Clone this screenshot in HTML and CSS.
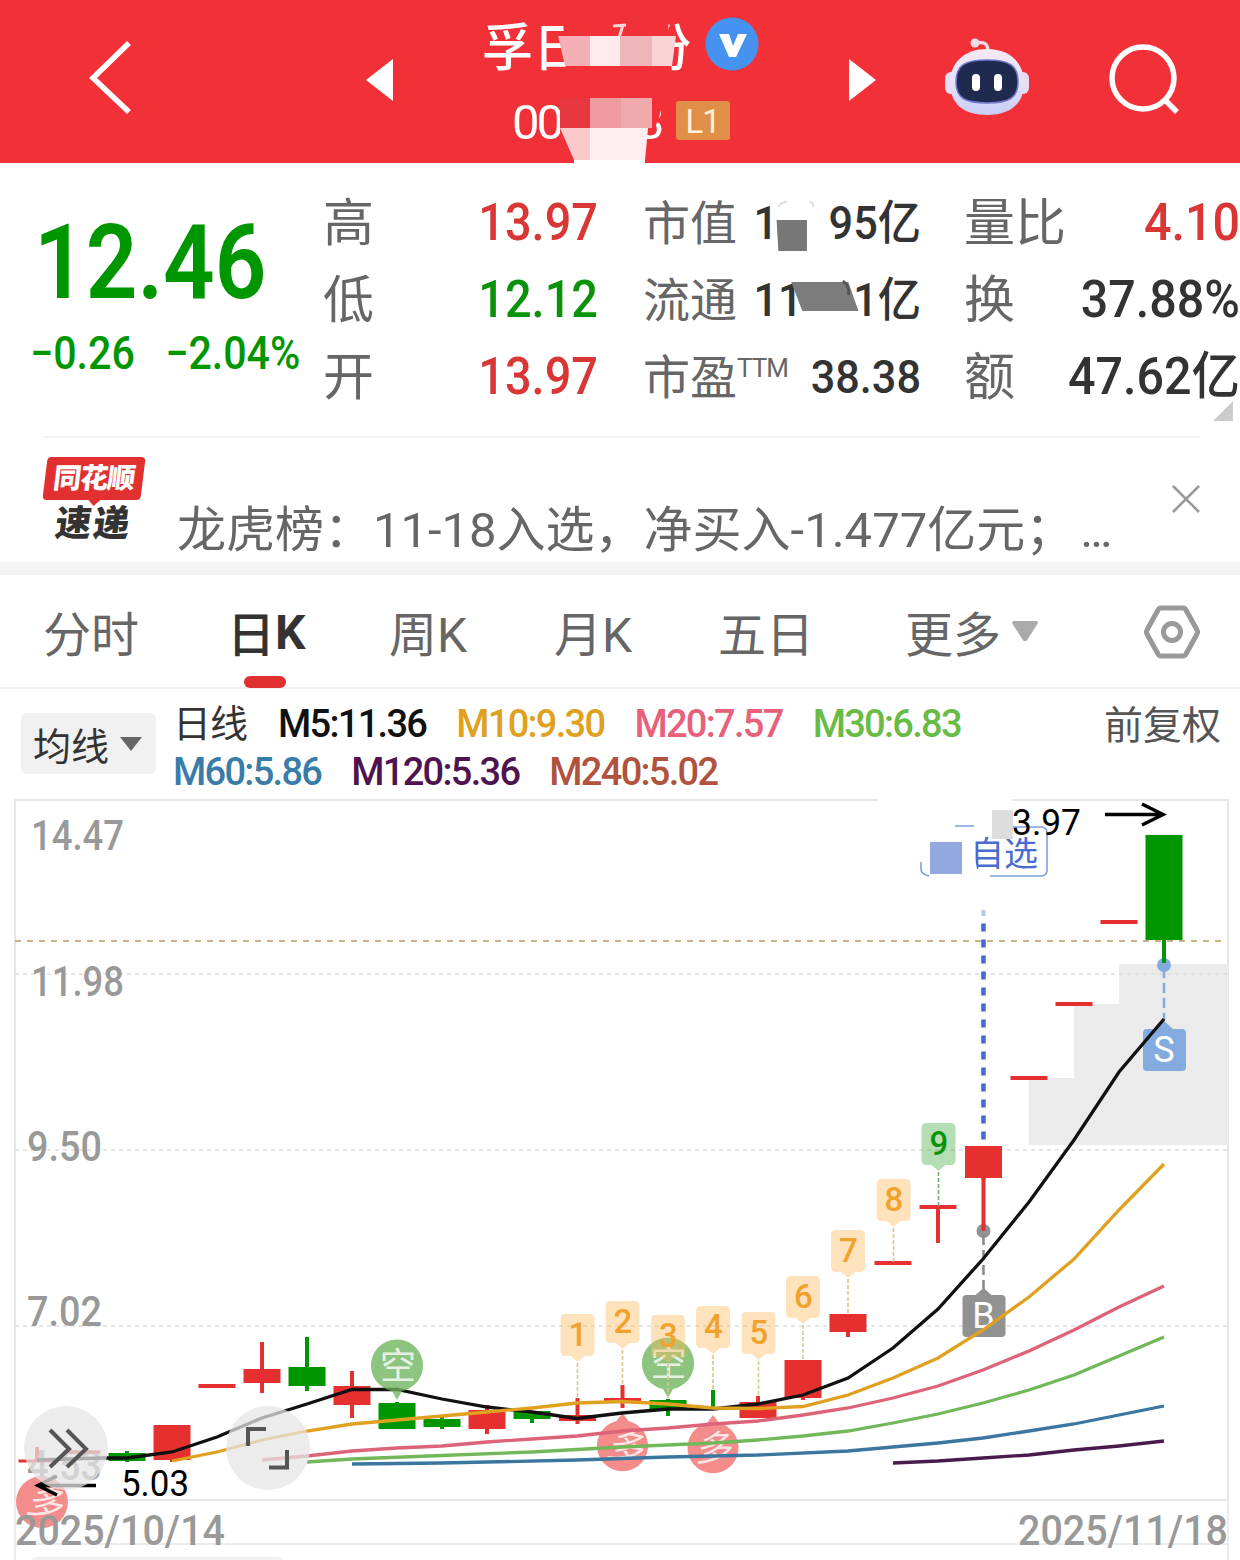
FILE: index.html
```html
<!DOCTYPE html>
<html lang="zh-CN">
<head>
  <meta charset="UTF-8">
  <title>日K</title>
  <link rel="stylesheet" href="styles.css">
</head>
<body>

  <header class="topbar">
    <svg class="back" width="46" height="78" viewBox="0 0 46 78"><path d="M41 4 L5 39 L41 73" fill="none" stroke="#fff" stroke-width="5.5"/></svg>
    <svg class="prev" width="27" height="42" viewBox="0 0 27 42"><path d="M27 0 V42 L0 21 Z" fill="#fff"/></svg>

    <div class="stock">
      <div class="stock-name">
        <span>孚日</span><span class="last">份</span>
        <svg class="verified" width="54" height="54" viewBox="0 0 54 54"><circle cx="27" cy="27" r="26.5" fill="#4592f0"/><path d="M14 17 h10 l4 12 5 -12 h9 l-11 23 h-7 z" fill="#fff"/></svg>
      </div>
      <div class="stock-code">
        <span>00</span><span class="last">3</span><b class="level">L1</b>
      </div>
      <svg class="mosaic" width="282" height="163" viewBox="480 0 282 163">
        <path d="M563 20 H668 L672 74 H566 Z" fill="#f23038"/>
        <path d="M623 25 L618 41 M613 26 l13 -1 M615 40 l12 -1" stroke="#fbd5d7" stroke-width="3" fill="none"/>
        <path d="M558 36 H590 V66 H565 Z" fill="#f4b0b4"/>
        <path d="M590 36h30v30h-30z" fill="#fdeaec"/>
        <path d="M620 36h32v30h-32z" fill="#efb6b9"/>
        <path d="M652 36h24l-4 30h-20z" fill="#f8d4d7"/>
        <path d="M560 98h92v34h-92z" fill="#e8383f"/>
        <path d="M652 98h10l-3 22 -5 8 -8 7h-5v-37z" fill="#f23038"/>
        <path d="M590 98h31v30h-31z" fill="#ef9ba0"/>
        <path d="M621 98h31v30h-31z" fill="#f0a9ad"/>
        <path d="M560 128h30v32h-16z" fill="#fac9cc"/>
        <path d="M590 128h58l-3 32h-55z" fill="#fdeff1"/>
        <path d="M574 160h71v3h-71z" fill="#fff"/>
      </svg>
    </div>

    <svg class="next" width="27" height="42" viewBox="0 0 27 42"><path d="M0 0 V42 L27 21 Z" fill="#fff"/></svg>
    <svg class="robot" width="84" height="78" viewBox="0 0 84 78">
      <defs>
        <linearGradient id="shell" x1="0" y1="0" x2="0" y2="1"><stop offset="0" stop-color="#f6e9f3"/><stop offset=".6" stop-color="#dfe0f8"/><stop offset="1" stop-color="#c9cdf5"/></linearGradient>
      </defs>
      <path d="M31 5 C39 3 43 6 43 13" fill="none" stroke="#f3dbe6" stroke-width="3.5"/>
      <circle cx="30" cy="5" r="4.5" fill="#f3dbe6"/>
      <rect x="0" y="34" width="14" height="22" rx="6" fill="#e9dcf2"/>
      <rect x="70" y="34" width="14" height="22" rx="6" fill="#e9dcf2"/>
      <path d="M42 11 C64 11 79 24 79 45 C79 66 65 77 42 77 C19 77 5 66 5 45 C5 24 20 11 42 11 Z" fill="url(#shell)"/>
      <path d="M42 22 C64 22 73 27 73 44 C73 60 64 65 42 65 C20 65 11 60 11 44 C11 27 20 22 42 22 Z" fill="#1e2b4f" stroke="#6f76cf" stroke-width="1.5"/>
      <rect x="27" y="36" width="8" height="17" rx="4" fill="#fff"/>
      <rect x="49" y="36" width="8" height="17" rx="4" fill="#fff"/>
    </svg>
    <svg class="search" width="71" height="71" viewBox="0 0 71 71"><circle cx="34" cy="34" r="31" fill="none" stroke="#fff" stroke-width="5.5"/><path d="M55 55 L68 68" stroke="#fff" stroke-width="5.5"/></svg>
  </header>

  <section class="quote">
    <div class="price">
      <div class="now">12.46</div>
      <div class="change"><span>−0.26</span><span>−2.04%</span></div>
    </div>
    <dl class="col col-a">
      <dt>高</dt><dd class="up">13.97</dd>
      <dt>低</dt><dd class="down">12.12</dd>
      <dt>开</dt><dd class="up">13.97</dd>
    </dl>
    <dl class="col col-b">
      <dt>市值</dt><dd><span>1</span><svg width="55" height="60" viewBox="0 0 55 60"><path d="M-2 29h33v31H0z" fill="#777"/><path d="M0 16 q3 -5 9 -5 M34 11 q4 0 4 5" fill="none" stroke="#ddd" stroke-width="2"/></svg><span>95亿</span></dd>
      <dt>流通</dt><dd><span>11</span><svg width="55" height="60" viewBox="0 0 55 60"><path d="M-12 14 H50 L61 43 H0 Z" fill="#7c7c7c"/><path d="M44 13 q8 5 6 14" fill="none" stroke="#555" stroke-width="3"/></svg><span>1亿</span></dd>
      <dt>市盈<sup>TTM</sup></dt><dd>38.38</dd>
    </dl>
    <dl class="col col-c">
      <dt>量比</dt><dd class="up">4.10</dd>
      <dt>换</dt><dd>37.88%</dd>
      <dt>额</dt><dd>47.62亿</dd>
    </dl>
    <svg class="corner" width="20" height="20" viewBox="0 0 20 20"><path d="M20 0 V20 H0 Z" fill="#ccc"/></svg>
  </section>

  <section class="news">
    <div class="news-logo">
      <div class="brand">同花顺</div>
      <div class="express">速递</div>
    </div>
    <p>龙虎榜：11-18入选，净买入-1.477亿元；<span class="dots">...</span></p>
    <svg class="close" width="28" height="28" viewBox="0 0 28 28"><path d="M1 1 L27 27 M27 1 L1 27" stroke="#999" stroke-width="2.6"/></svg>
  </section>

  <nav class="tabs">
    <a>分时</a>
    <a class="active">日<b>K</b></a>
    <a>周K</a>
    <a>月K</a>
    <a>五日</a>
    <a>更多<svg width="26" height="21" viewBox="0 0 26 21"><path d="M1 0 H25 L26 2 L14.5 20 H11.5 L0 2 Z" fill="#aaa"/></svg></a>
    <svg class="settings" width="56" height="54" viewBox="0 0 56 54"><path d="M17 3 H39 Q41 3 42 5 L53 25 Q54 27 53 29 L42 49 Q41 51 39 51 H17 Q15 51 14 49 L3 29 Q2 27 3 25 L14 5 Q15 3 17 3 Z" fill="none" stroke="#999" stroke-width="5"/><circle cx="28" cy="27" r="8.5" fill="none" stroke="#999" stroke-width="5"/></svg>
  </nav>

  <section class="averages">
    <button class="ma-button">均线<svg width="22" height="14" viewBox="0 0 22 14"><path d="M0 0 H22 L11 14 Z" fill="#666"/></svg></button>
    <div class="ma-list">
      <div class="ma-row">
        <span class="cycle">日线</span>
        <span class="m5">M5:11.36</span>
        <span class="m10">M10:9.30</span>
        <span class="m20">M20:7.57</span>
        <span class="m30">M30:6.83</span>
      </div>
      <div class="ma-row">
        <span class="m60">M60:5.86</span>
        <span class="m120">M120:5.36</span>
        <span class="m240">M240:5.02</span>
      </div>
    </div>
    <span class="adjust">前复权</span>
  </section>

  <svg class="chart" width="1240" height="761" viewBox="0 799 1240 761">
    <!-- frame and grid -->
    <path d="M878 800 H15 V1500 H1228 V800 H1012" fill="none" stroke="#e6e6e6" stroke-width="2"/>
    <path d="M15 1500 V1560 M1228 1500 V1560 M15 1544 H1228" stroke="#ececec" stroke-width="2"/>
    <rect x="30" y="1557" width="254" height="20" rx="6" fill="#f1f1f1"/>
    <path d="M1029 1145 V1078 H1074 V1004 H1119 V964 H1228 V1145 Z" fill="#ebebeb"/>
    <path d="M15 974 H1228 M15 1150 H1228 M15 1326 H1228" stroke="#ddd" stroke-width="1.3" stroke-dasharray="4 4"/>
    <path d="M15 941 H1224" stroke="#c9b483" stroke-width="2" stroke-dasharray="6 6"/>

    <g class="axis">
      <text x="31" y="850" textLength="93" lengthAdjust="spacingAndGlyphs">14.47</text>
      <text x="31" y="996" textLength="93" lengthAdjust="spacingAndGlyphs">11.98</text>
      <text x="27" y="1161" textLength="75" lengthAdjust="spacingAndGlyphs">9.50</text>
      <text x="27" y="1326" textLength="75" lengthAdjust="spacingAndGlyphs">7.02</text>
      <text x="27" y="1480" textLength="75" lengthAdjust="spacingAndGlyphs">4.53</text>
    </g>

    <g id="candles"></g>

    <!-- buy / sell marks -->
    <circle cx="983.5" cy="1231" r="7" fill="#929292"/>
    <path d="M983.5 1178 V1231" stroke="#e63030" stroke-width="4"/>
    <path d="M983.5 1235 V1289" stroke="#888" stroke-width="2.5" stroke-dasharray="10 5"/>
    <path d="M983.5 1288 l8 7 h10 q4 0 4 4 v34 q0 4 -4 4 h-35 q-4 0 -4 -4 v-34 q0 -4 4 -4 h9 z" fill="#929292"/>
    <text class="mark" x="983.5" y="1328">B</text>
    <circle cx="1164" cy="965" r="7" fill="#83abdf"/>
    <path d="M1164 940 V963" stroke="#0a930a" stroke-width="4"/>
    <path d="M1164 968 V1020" stroke="#83abdf" stroke-width="2.5" stroke-dasharray="10 5"/>
    <path d="M1164 1021 l9 8 h9 q4 0 4 4 v34 q0 4 -4 4 h-35 q-4 0 -4 -4 v-34 q0 -4 4 -4 h9 z" fill="#83abdf"/>
    <text class="mark" x="1164" y="1062">S</text>

    <g class="signal bull">
      <circle cx="42" cy="1502" r="26"/>
      <path d="M622.5 1413 l6 8 a25.5 25.5 0 1 1 -12 0 z"/>
      <path d="M713 1415 l6 8 a25.5 25.5 0 1 1 -12 0 z"/>
      <text transform="translate(42 1515) rotate(12) skewX(-12)">多</text>
      <text transform="translate(622.5 1459) rotate(12) skewX(-12)">多</text>
      <text transform="translate(713 1461) skewX(-12)">多</text>
    </g>

    <!-- moving averages -->
    <g class="lines">
      <polyline stroke="#4a1a4c" points="893,1463 938,1461 983,1458 1029,1455 1074,1450 1119,1446 1164,1441"/>
      <polyline stroke="#3a76a0" points="352,1464 397,1463.5 442,1463 487,1462 577,1460 668,1457 758,1455 848,1451 893,1447 938,1443 983,1438 1029,1431 1074,1424 1119,1415 1164,1406"/>
      <polyline stroke="#72b85a" points="307,1462 352,1459 442,1455.5 532,1452 622,1447 713,1443 758,1440 803,1436 848,1431 893,1423 938,1414 983,1403 1029,1390 1074,1375 1119,1356 1164,1337"/>
      <polyline stroke="#dd6478" points="262,1460 307,1456 352,1451 397,1448 442,1446 487,1442 532,1439 577,1436 622,1431 668,1428 713,1424 758,1421 803,1415 848,1408 893,1398 938,1386 983,1370 1029,1351 1074,1330 1119,1307 1164,1286"/>
      <polyline stroke="#111" points="37,1460 100,1458 127,1458 172,1452 217,1437 262,1418 307,1404 352,1389.5 397,1389.5 442,1399 487,1407 532,1412 577,1418.5 622,1413 668,1409 713,1409 758,1404 803,1395 848,1378 893,1348 938,1309 983,1259 1029,1202 1074,1140 1119,1072 1164,1019"/>
      <polyline stroke="#e0a020" points="172,1461 217,1452 262,1440 307,1431 352,1424 397,1420 442,1416 487,1412 532,1408 577,1403 622,1401.5 668,1404 713,1408 758,1408.5 803,1406.5 848,1395 893,1378 938,1358 983,1330 1029,1297 1074,1259 1119,1210 1164,1164"/>
    </g>

    <g class="signal bear">
      <path d="M397 1400 l-5 -9 a26 26 0 1 1 10 0 z"/>
      <path d="M668 1398 l-5 -9 a26 26 0 1 1 10 0 z"/>
      <text x="398" y="1379">空</text>
      <text x="668.5" y="1376">空</text>
    </g>

    <g id="tags"></g>

    <!-- watchlist flag -->
    <path d="M983.5 910 V916" stroke="#b9c6ec" stroke-width="4"/>
    <path d="M983.5 923.5 V1141" stroke="#4468cc" stroke-width="4.5" stroke-dasharray="8 8"/>
    <path d="M1002 827 H1041 Q1047 827 1047 833 V870 Q1047 876 1041 876 H990 M955 826 H974 M921 862 V869 Q921 874 929 876" fill="none" stroke="#7c9fdd" stroke-width="1.6"/>
    <text class="flag" x="970" y="866">自选</text>
    <path d="M962 838 H971 L978 874 H962 Z" fill="#fff"/>
    <rect x="930" y="842" width="32" height="32" fill="#94a9e0"/>
    <rect x="992" y="810" width="21" height="29" fill="#ddd"/>
    <text class="extreme" x="1012" y="835" textLength="69" lengthAdjust="spacingAndGlyphs">3.97</text>
    <path d="M1105 814.5 H1163 M1142 804 L1163 814.5 L1142 825" fill="none" stroke="#000" stroke-width="3.5"/>

    <text class="extreme" x="121" y="1496" textLength="68" lengthAdjust="spacingAndGlyphs">5.03</text>
    <path d="M96 1485.5 H38 M57 1476 L38 1485.5 L57 1495" fill="none" stroke="#000" stroke-width="3.5"/>
    <g class="axis">
      <text x="15" y="1545" textLength="210" lengthAdjust="spacingAndGlyphs">2025/10/14</text>
      <text x="1228" y="1545" text-anchor="end" textLength="210" lengthAdjust="spacingAndGlyphs">2025/11/18</text>
    </g>

    <!-- floating buttons -->
    <g class="float">
      <circle cx="66" cy="1448" r="42"/>
      <circle cx="268" cy="1448" r="42"/>
      <path d="M50 1430 L69 1449 L50 1467 M67 1430 L86 1449 L67 1467"/>
      <path d="M248 1446 V1429 H266 M269 1467.5 H287 V1450"/>
    </g>
  </svg>

  <script>
  const NS = "http://www.w3.org/2000/svg";

  // x, body top, body bottom, wick top, wick bottom, colour
  const candles = [
    [37, 1459.5, 1462.5, 1447, 1462, "r"],
    [82, 1450.5, 1453.5, 1451, 1453, "r"],
    [127, 1453, 1461, 1451, 1462, "g"],
    [172, 1425, 1460, 1425, 1462, "r"],
    [217, 1384, 1388, 1385, 1387, "r"],
    [262, 1369, 1383, 1342, 1393, "r"],
    [307, 1367, 1386, 1337, 1391, "g"],
    [352, 1386, 1405, 1371, 1418, "r"],
    [397, 1403, 1429, 1402, 1429, "g"],
    [442, 1419, 1427, 1415, 1429, "g"],
    [487, 1410, 1429, 1405, 1434, "r"],
    [532, 1411, 1419, 1411, 1423, "g"],
    [577.5, 1415, 1421, 1398, 1424, "r"],
    [622.5, 1398, 1402, 1385, 1408, "r"],
    [668, 1400, 1409, 1399, 1416, "g"],
    [713, 1407, 1410, 1390, 1410, "g"],
    [758, 1402, 1418, 1396, 1418, "r"],
    [803, 1360, 1398, 1360, 1400, "r"],
    [848, 1314, 1332, 1314, 1337, "r"],
    [893, 1261, 1265, 1262, 1264, "r"],
    [938, 1205, 1209, 1205, 1243, "r"],
    [983.5, 1146, 1178, 1146, 1180, "r"],
    [1029, 1076, 1080, 1077, 1079, "r"],
    [1074, 1002, 1006, 1003, 1005, "r"],
    [1119, 920, 924, 921, 923, "r"],
    [1164, 835, 940, 835, 963, "g"]
  ];

  // number, x, top of tag, end of dashed line
  const tags = [
    [1, 577.5, 1314, 1398],
    [2, 622.5, 1301, 1385],
    [3, 668, 1315, 1399],
    [4, 713, 1306, 1390],
    [5, 758.5, 1312, 1396],
    [6, 803, 1276, 1360],
    [7, 848, 1230, 1314],
    [8, 893.5, 1179, 1262],
    [9, 938.5, 1123, 1206]
  ];

  function add(parent, name, attrs) {
    const el = document.createElementNS(NS, name);
    for (const key in attrs) el.setAttribute(key, attrs[key]);
    parent.appendChild(el);
    return el;
  }

  const candleLayer = document.getElementById("candles");
  candles.forEach(([x, top, bottom, high, low, c]) => {
    const fill = c === "r" ? "#e63030" : "#009600";
    add(candleLayer, "rect", { x: x - 2, y: high, width: 4, height: low - high, fill });
    add(candleLayer, "rect", { x: x - 18.5, y: top, width: 37, height: bottom - top, fill });
  });

  const tagLayer = document.getElementById("tags");
  tags.forEach(([n, x, y, end]) => {
    const g = add(tagLayer, "g", { class: n === 9 ? "tag tag-done" : "tag" });
    add(g, "path", { class: "stem", d: `M${x} ${y + 49} V${end}` });
    add(g, "path", { class: "bubble", d: `M${x - 12} ${y} h24 q5 0 5 5 v32 q0 5 -5 5 h-5 l-7 6 -7 -6 h-5 q-5 0 -5 -5 v-32 q0 -5 5 -5 z` });
    add(g, "text", { x: x + 0.5, y: y + 32 }).textContent = n;
  });
  </script>

</body>
</html>
```
FILE: styles.css
```css
* {
  box-sizing: border-box;
}

body {
  margin: 0;
  width: 1240px;
  height: 1560px;
  overflow: hidden;
  background: #fff;
  color: #333;
  font-family: Roboto, "Noto Sans CJK SC", sans-serif;
}

svg {
  display: block;
  flex: none;
}

.topbar {
  display: flex;
  align-items: center;
  height: 163px;
  padding-bottom: 4px;
  background: #f23038;
  color: #fff;
}

.back {
  margin: 0 232px 4px 88px;
}

.stock {
  position: relative;
  align-self: flex-start;
  width: 282px;
  height: 163px;
  margin: 0 87px;
}

.stock-name {
  display: flex;
  align-items: center;
  height: 92px;
  padding-left: 2px;
  font-size: 51px;
  font-weight: 500;
}

.stock-name span {
  margin-top: -5px;
}

.stock-name .last {
  margin-left: 56px;
}

.verified {
  margin: 0 0 4px 14px;
}

.stock-code {
  display: flex;
  align-items: center;
  height: 60px;
  padding-left: 32px;
  font-size: 49px;
  letter-spacing: -3px;
}

.stock-code .last {
  margin-left: 76px;
}

.level {
  width: 54px;
  height: 39px;
  margin: -3px 0 0 14px;
  border-radius: 3px;
  background: #e08f48;
  color: #fff0d8;
  font-size: 33px;
  font-weight: 400;
  letter-spacing: -1px;
  line-height: 41px;
  text-align: center;
}

.mosaic {
  position: absolute;
  left: 0;
  top: 0;
}

.robot {
  margin: 0 80px 6px 69px;
}

.quote {
  position: relative;
  display: flex;
  height: 273px;
  padding-top: 21px;
}

.price {
  width: 323px;
  padding-left: 34px;
  color: #009600;
  font-weight: 500;
}

.now {
  width: 270px;
  height: 130px;
  padding-top: 14px;
  font-size: 104px;
  font-weight: 600;
  line-height: 130px;
  transform: scaleX(0.87);
  transform-origin: left;
}

.change {
  display: flex;
  gap: 34px;
  margin: 12px 0 0 -4px;
  font-size: 46px;
  line-height: 54px;
  white-space: nowrap;
  transform: scaleX(0.895);
  transform-origin: left;
}

.col {
  display: grid;
  grid-template-columns: 94px 1fr;
  grid-auto-rows: 77px;
  margin: 0;
  line-height: 78px;
  white-space: nowrap;
}

.col-a {
  width: 275px;
}

.col-b {
  width: 278px;
  margin-left: 45px;
}

.col-c {
  grid-template-columns: 56px 1fr;
  width: 276px;
  margin-left: 43px;
}

.col dt {
  padding-top: 1px;
  color: #666;
  font-size: 51px;
}

.col-b dt {
  font-size: 47px;
}

.col-b sup {
  font-size: 26px;
  letter-spacing: -1px;
  line-height: 0;
  vertical-align: 17px;
}

.col dd {
  display: flex;
  justify-content: flex-end;
  margin: 0;
  font-size: 51px;
  font-weight: 500;
  transform: scaleX(0.92);
  transform-origin: right;
}

.col-b dd {
  font-size: 47px;
}

.col-c dd {
  transform: scaleX(0.95);
}

.col-b dd svg {
  margin-top: 7px;
  overflow: visible;
}

.up {
  color: #d93636;
}

.down {
  color: #0a930a;
}

.corner {
  position: absolute;
  left: 1213px;
  top: 238px;
}

.news {
  display: flex;
  height: 126px;
  margin: 0 40px 0 42px;
  border-top: 2px solid #f4f4f4;
}

.news-logo {
  width: 104px;
  margin: 19px 30px 0 1px;
  font-weight: 900;
  text-align: center;
}

.brand {
  position: relative;
  width: 98px;
  height: 43px;
  margin-left: 2px;
  border-radius: 4px;
  background: #e23030;
  color: #fff;
  font-size: 28px;
  letter-spacing: -1px;
  line-height: 43px;
  transform: skewX(-7deg);
}

.brand::after {
  content: "";
  position: absolute;
  left: 45px;
  top: 42px;
  border: 7px solid transparent;
  border-top-color: #e23030;
  border-bottom: 0;
}

.express {
  height: 48px;
  padding-right: 3px;
  font-size: 36px;
  letter-spacing: 2px;
  line-height: 48px;
  transform: skewX(-7deg);
}

.news p {
  width: 963px;
  margin: 0;
  padding-top: 58px;
  color: #666;
  font-size: 49px;
  line-height: 70px;
  white-space: nowrap;
}

.dots {
  letter-spacing: -3px;
  margin-left: 6px;
}

.close {
  margin: 47px 0 0 33px;
}

.tabs {
  display: grid;
  grid-template-columns: 188px 158px 165px 164px 187px 239px 56px;
  height: 127px;
  padding-left: 43px;
  border-top: 13px solid #f4f4f4;
  border-bottom: 2px solid #f1f1f1;
}

.tabs a {
  display: flex;
  align-items: center;
  height: 111px;
  color: #666;
  font-size: 48px;
}

.tabs a svg {
  margin: 2px 0 0 11px;
}

.tabs .active {
  position: relative;
  margin-left: -4px;
  color: #333;
  font-weight: 500;
}

.tabs .active::after {
  content: "";
  position: absolute;
  left: 17px;
  top: 101px;
  width: 42px;
  height: 12px;
  border-radius: 6px;
  background: #e03030;
}

.tabs b {
  margin-top: 4px;
}

.settings {
  margin-top: 30px;
}

.averages {
  display: flex;
  height: 110px;
  padding: 10px 19px 0 21px;
}

.ma-button {
  display: flex;
  align-items: center;
  width: 135px;
  height: 61px;
  margin: 14px 17px 0 0;
  padding: 0 0 0 12px;
  border: 0;
  border-radius: 6px;
  background: #f1f1f1;
  color: #333;
  font: inherit;
  font-size: 38px;
}

.ma-button svg {
  margin-left: 11px;
}

.ma-list {
  flex: 1;
}

.ma-row {
  display: flex;
  height: 48px;
  font-size: 38px;
  font-weight: 500;
  letter-spacing: -1.7px;
  line-height: 50px;
}

.ma-row span {
  margin-right: 30px;
  white-space: nowrap;
}

.ma-row .cycle {
  margin-right: 31px;
  font-weight: 400;
  letter-spacing: -1px;
}

.m5 { color: #111; }
.m10 { color: #e0a020; }
.m20 { color: #e8607a; }
.m30 { color: #68bb45; }
.m60 { color: #3a7ca8; }
.m120 { color: #4e144f; }
.m240 { color: #b0523d; }

.adjust {
  color: #555;
  font-size: 39px;
  line-height: 54px;
}

.chart text {
  font-family: Roboto, "Noto Sans CJK SC", sans-serif;
}

.axis text {
  fill: #999;
  font-size: 42px;
  font-weight: 500;
}

.lines polyline {
  fill: none;
  stroke-width: 3.3;
}

.tag .bubble {
  fill: #fab95e;
  fill-opacity: 0.42;
}

.tag .stem {
  stroke: #dfc48a;
  stroke-width: 1.6;
  stroke-dasharray: 4 2;
}

.tag text {
  fill: #f0a22c;
  font-size: 33px;
  font-weight: 500;
  text-anchor: middle;
}

.tag-done .bubble {
  fill: #0a930a;
  fill-opacity: 0.3;
}

.tag-done .stem {
  stroke: #6fae6f;
}

.tag-done text {
  fill: #0a930a;
}

.chart .mark {
  fill: #fff;
  font-size: 36px;
  text-anchor: middle;
}

.signal text {
  fill: #fff;
  fill-opacity: 0.8;
  font-size: 36px;
  text-anchor: middle;
}

.bull path,
.bull circle {
  fill: #f58c8c;
}

.bear path {
  fill: #6cb45c;
  fill-opacity: 0.78;
}

.chart .flag {
  fill: #4a6bd0;
  font-size: 34px;
}

.chart .extreme {
  fill: #000;
  font-size: 36px;
}

.float circle {
  fill: #e5e5e5;
  fill-opacity: 0.74;
}

.float path {
  fill: none;
  stroke: #555;
  stroke-width: 4;
}
```
